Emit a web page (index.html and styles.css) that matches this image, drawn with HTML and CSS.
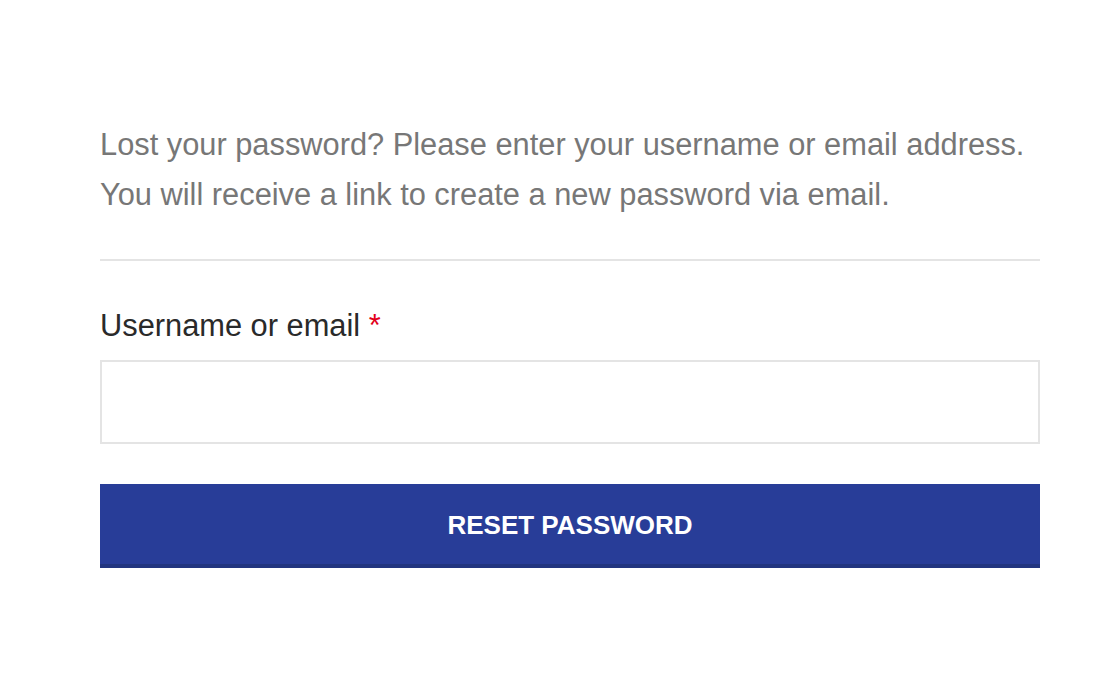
FILE: index.html
```html
<!DOCTYPE html>
<html lang="en">
<head>
<meta charset="utf-8">
<title>Lost password</title>
<link rel="stylesheet" href="styles.css">
</head>
<body>
<main class="page">
  <form class="lost-form">
    <p class="intro">Lost your password? Please enter your username or email address.<br>You will receive a link to create a new password via email.</p>
    <hr class="divider">
    <label class="field-label" for="user_login">Username or email <span class="required">*</span></label>
    <input class="field-input" type="text" id="user_login" name="user_login">
    <button class="reset-btn" type="button">RESET PASSWORD</button>
  </form>
</main>
</body>
</html>
```
FILE: styles.css
```css
html, body {
  margin: 0;
  padding: 0;
  background: #ffffff;
}
body {
  font-family: "Liberation Sans", Arial, Helvetica, sans-serif;
}
.page {
  padding: 120px 78px 0 100px;
}
.lost-form {
  display: flex;
  flex-direction: column;
  width: 940px;
}
.intro {
  margin: 0;
  font-size: 30.8px;
  line-height: 50px;
  color: #777777;
}
.divider {
  margin: 39px 0 0 0;
  border: 0;
  height: 2px;
  background: #e4e4e4;
}
.field-label {
  margin-top: 42px;
  font-size: 30.8px;
  line-height: 45px;
  color: #2a2a2a;
}
.required {
  color: #e2001a;
}
.field-input {
  margin-top: 12px;
  box-sizing: border-box;
  width: 100%;
  height: 84px;
  border: 2px solid #e4e4e4;
  background: #ffffff;
  outline: none;
  font-size: 30px;
  padding: 0 20px;
}
.reset-btn {
  margin-top: 40px;
  box-sizing: border-box;
  width: 100%;
  height: 84px;
  border: 0;
  border-bottom: 4px solid #22357f;
  background: #283d98;
  color: #ffffff;
  font-family: "Liberation Sans", Arial, Helvetica, sans-serif;
  font-weight: bold;
  font-size: 26px;
  padding: 3px 0 0 0;
}
```
